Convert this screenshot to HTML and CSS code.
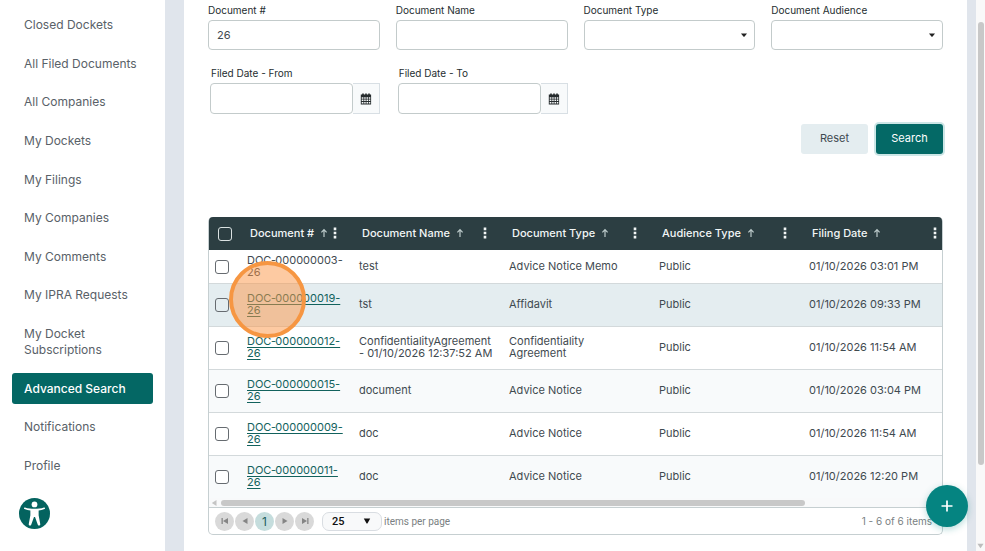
FILE: index.html
```html
<!DOCTYPE html>
<html lang="en">
<head>
<meta charset="utf-8">
<meta name="viewport" content="width=device-width, initial-scale=1">
<title>Advanced Search</title>
<link rel="stylesheet" href="styles.css">
</head>
<body>
<svg class="sprite" aria-hidden="true">
  <symbol id="caret" viewBox="0 0 8 5"><path d="M1 .6h6L4.4 3.8h-.8z" fill="#222"/></symbol>
  <symbol id="sort" viewBox="0 0 8 10"><path d="M4 9V1.8M1.4 4.3 4 1.6l2.6 2.7" fill="none" stroke="#bccaca" stroke-width="1.2"/></symbol>
  <symbol id="kebab" viewBox="0 0 4 12"><path d="M.7.6h2.6v2.6H.7zM.7 4.7h2.6v2.6H.7zM.7 8.8h2.6v2.6H.7z" fill="#f2f6f6"/></symbol>
  <symbol id="calendar" viewBox="0 0 12 12"><path d="M2.2.5h1.6v1h1.4v-1h1.6v1h1.4v-1h1.6v1h1.3v10H.8v-10h1.4z" fill="#252b2d"/><path d="M1.7 4.2h1.7v1.6H1.7zM4.2 4.2h1.5v1.6H4.2zM6.5 4.2H8v1.6H6.5zM8.8 4.2h1.5v1.6H8.8zM1.7 6.6h1.7v1.5H1.7zM4.2 6.6h1.5v1.5H4.2zM6.5 6.6H8v1.5H6.5zM8.8 6.6h1.5v1.5H8.8zM1.7 8.9h1.7v1.6H1.7zM4.2 8.9h1.5v1.6H4.2zM6.5 8.9H8v1.6H6.5zM8.8 8.9h1.5v1.6H8.8z" fill="#f8fafb"/></symbol>
</svg>
<div class="app">
  <aside class="sidebar">
    <nav class="menu">
      <a href="#">Closed Dockets</a>
      <a href="#">All Filed Documents</a>
      <a href="#">All Companies</a>
      <a href="#">My Dockets</a>
      <a href="#">My Filings</a>
      <a href="#">My Companies</a>
      <a href="#">My Comments</a>
      <a href="#">My IPRA Requests</a>
      <a href="#">My Docket Subscriptions</a>
      <a href="#" class="active">Advanced Search</a>
      <a href="#">Notifications</a>
      <a href="#">Profile</a>
    </nav>
    <button class="access" type="button" aria-label="Accessibility options">
      <svg viewBox="0 0 30 30"><circle cx="15" cy="15" r="15" fill="#04635f"/><circle cx="15" cy="6.2" r="2.8" fill="#fff"/><path d="M5.8 9.2c3 1.1 6 1.3 9.2 1.3s6.2-.2 9.2-1.3c1-.3 1.4 1.1.5 1.5-1.8.7-3.9 1.2-5.7 1.5v4.6l1.600 8.500c.2 1.500-1.900 2-2.400.5L15.500 18.500h-1L11.800 25.800c-.5 1.500-2.600 1-2.400-.5l1.600-8.500v-4.600c-1.800-.3-3.900-.8-5.700-1.500-.9-.4-.5-1.800.5-1.500z" fill="#fff"/></svg>
    </button>
  </aside>

  <main class="content">
    <form class="filters">
      <div class="fields">
        <div class="field"><label for="doc-no">Document #</label><input id="doc-no" type="text" value="26"></div>
        <div class="field"><label for="doc-name">Document Name</label><input id="doc-name" type="text"></div>
        <div class="field"><label for="doc-type">Document Type</label>
          <div class="dropdown"><select id="doc-type"><option></option></select><svg><use href="#caret"/></svg></div></div>
        <div class="field"><label for="doc-aud">Document Audience</label>
          <div class="dropdown"><select id="doc-aud"><option></option></select><svg><use href="#caret"/></svg></div></div>
        <div class="field date"><label for="from">Filed Date - From</label>
          <div class="picker"><input id="from" type="text"><button type="button" aria-label="Choose from date"><svg><use href="#calendar"/></svg></button></div></div>
        <div class="field date"><label for="to">Filed Date - To</label>
          <div class="picker"><input id="to" type="text"><button type="button" aria-label="Choose to date"><svg><use href="#calendar"/></svg></button></div></div>
      </div>
      <div class="actions">
        <button type="button" class="btn">Reset</button>
        <button type="button" class="btn primary">Search</button>
      </div>
    </form>

    <section class="grid">
      <table>
        <colgroup><col class="c-check"><col class="c-id"><col class="c-std"><col class="c-std"><col class="c-std"><col></colgroup>
        <thead>
          <tr>
            <th><input type="checkbox" aria-label="Select all"></th>
            <th><div class="head"><span>Document #</span><svg class="sort"><use href="#sort"/></svg><svg class="kebab"><use href="#kebab"/></svg></div></th>
            <th><div class="head"><span>Document Name</span><svg class="sort"><use href="#sort"/></svg><svg class="kebab"><use href="#kebab"/></svg></div></th>
            <th><div class="head"><span>Document Type</span><svg class="sort"><use href="#sort"/></svg><svg class="kebab"><use href="#kebab"/></svg></div></th>
            <th><div class="head"><span>Audience Type</span><svg class="sort"><use href="#sort"/></svg><svg class="kebab"><use href="#kebab"/></svg></div></th>
            <th><div class="head"><span>Filing Date</span><svg class="sort"><use href="#sort"/></svg><svg class="kebab"><use href="#kebab"/></svg></div></th>
          </tr>
        </thead>
        <tbody>
          <tr class="first"><td><input type="checkbox" aria-label="Select row"></td><td>DOC&#8209;000000003-<br>26</td><td>test</td><td>Advice Notice Memo</td><td>Public</td><td>01/10/2026 03:01 PM</td></tr>
          <tr class="hover"><td><input type="checkbox" aria-label="Select row"></td><td class="target"><a href="#">DOC&#8209;000000019-<br>26</a><span class="pointer"></span></td><td>tst</td><td>Affidavit</td><td>Public</td><td>01/10/2026 09:33 PM</td></tr>
          <tr><td><input type="checkbox" aria-label="Select row"></td><td><a href="#">DOC&#8209;000000012-<br>26</a></td><td>ConfidentialityAgreement<br>- 01/10/2026 12:37:52 AM</td><td>Confidentiality<br>Agreement</td><td>Public</td><td>01/10/2026 11:54 AM</td></tr>
          <tr class="alt"><td><input type="checkbox" aria-label="Select row"></td><td><a href="#">DOC&#8209;000000015-<br>26</a></td><td>document</td><td>Advice Notice</td><td>Public</td><td>01/10/2026 03:04 PM</td></tr>
          <tr><td><input type="checkbox" aria-label="Select row"></td><td><a href="#">DOC&#8209;000000009-<br>26</a></td><td>doc</td><td>Advice Notice</td><td>Public</td><td>01/10/2026 11:54 AM</td></tr>
          <tr class="alt"><td><input type="checkbox" aria-label="Select row"></td><td><a href="#">DOC&#8209;000000011-<br>26</a></td><td>doc</td><td>Advice Notice</td><td>Public</td><td>01/10/2026 12:20 PM</td></tr>
        </tbody>
      </table>
      <div class="hscroll"><svg viewBox="0 0 6 8"><path d="M5.5 1v6L.8 4z" fill="#c4c4c4"/></svg><span class="track"><span class="thumb"></span></span></div>
      <div class="pager">
        <button type="button" aria-label="First page"><svg viewBox="0 0 10 10"><path d="M1.5 2h1.300v6H1.500zM8 2v6L3 5z"/></svg></button>
        <button type="button" aria-label="Previous page"><svg viewBox="0 0 10 10"><path d="M7.500 2v6l-5-3z"/></svg></button>
        <button type="button" class="current">1</button>
        <button type="button" aria-label="Next page"><svg viewBox="0 0 10 10"><path d="M2.500 2v6l5-3z"/></svg></button>
        <button type="button" aria-label="Last page"><svg viewBox="0 0 10 10"><path d="M2 2v6l5-3zM7.200 2h1.300v6H7.200z"/></svg></button>
        <div class="dropdown size"><select id="size"><option>25</option></select><svg viewBox="0 0 8 6"><path d="M.8.5h6.400L4.400 5.500h-.8z" fill="#111"/></svg></div>
        <label for="size">items per page</label>
        <span class="count">1 - 6 of 6 items</span>
      </div>
    </section>
  </main>

  <div class="vscroll"><span class="bar"></span><svg viewBox="0 0 8 6"><path d="M.5.5h7L4 5.500z" fill="#bdbdbd"/></svg></div>
</div>
<button class="fab" type="button" aria-label="Add"><svg viewBox="0 0 12 12"><path d="M6 .5v11M.5 6h11" stroke="#fff" stroke-width="1.700"/></svg></button>
</body>
</html>
```
FILE: styles.css
```css
* { box-sizing: border-box; }
body {
  margin: 0;
  font-family: Inter, "Open Sans", sans-serif;
  font-size: 12px;
  color: #3f4a50;
  background: #e0e5ec;
}
button, input, select { font: inherit; color: inherit; margin: 0; }
.sprite { display: none; }

.app {
  display: grid;
  grid-template-columns: 165px 1fr 9px;
  height: 100vh;
  overflow: hidden;
}

/* Sidebar */
.sidebar {
  display: flex;
  flex-direction: column;
  gap: 17px;
  padding: 9px 12px 22px;
  background: #fff;
}
.menu {
  flex: 1;
  display: flex;
  flex-direction: column;
  justify-content: space-between;
}
.menu a {
  padding: 8px 12px 7px;
  line-height: 16px;
  border-radius: 3px;
  color: #596168;
  text-decoration: none;
}
.menu .active { background: #046764; color: #fff; font-weight: 500; }
.access {
  width: 31px;
  height: 31px;
  margin-left: 7px;
  padding: 0;
  border: 0;
  background: none;
}
.access svg { display: block; width: 100%; height: 100%; }

/* Search form */
.content {
  margin: 0 9px 0 19px;
  padding: 0 24px;
  background: #fff;
}
.fields {
  display: grid;
  grid-template-columns: repeat(4, 1fr);
  gap: 13px 16px;
}
.field label {
  display: block;
  font-size: 10px;
  line-height: 20px;
  color: #252d30;
}
.field input, .field select {
  display: block;
  width: 100%;
  height: 30px;
  padding: 0 8px;
  border: 1px solid #c3cbcb;
  border-radius: 4px;
  background: #fff;
  font-size: 11px;
}
.date { padding-left: 2px; }
.date label { padding-left: 1px; }
.picker { display: flex; }
.picker input { flex: 1; min-width: 0; height: 31px; }
.picker button {
  display: grid;
  place-items: center;
  width: 27px;
  padding: 0;
  border: 1px solid #d8dfe4;
  border-left: 0;
  background: #f8fafb;
}
.picker svg { width: 12px; height: 12px; }
.dropdown { display: grid; align-items: center; }
.dropdown select { grid-area: 1 / 1; appearance: none; }
.dropdown svg {
  grid-area: 1 / 1;
  justify-self: end;
  width: 8px;
  height: 5px;
  margin-right: 7px;
  pointer-events: none;
}
.actions {
  display: flex;
  justify-content: flex-end;
  gap: 8px;
  margin: 10px 0 63px;
}
.btn {
  width: 67px;
  height: 30px;
  padding: 0 0 2px;
  border: 0;
  border-radius: 3px;
  background: #e4edf0;
  font-size: 11px;
}
.primary {
  background: #046966;
  color: #fff;
  box-shadow: 0 0 0 2px #cce6e6;
}

/* Results */
.grid {
  border: 1px solid #c6cfd1;
  border-top: 0;
  border-radius: 5px;
}
table {
  width: 100%;
  table-layout: fixed;
  border-collapse: separate;
  border-spacing: 0;
  font-size: 11px;
}
.c-check { width: 30px; }
.c-id { width: 112px; }
.c-std { width: 150px; }
th {
  height: 33px;
  padding: 0 14px 1px 11px;
  background: #2c3e42;
  color: #f2f6f6;
  font-weight: 500;
  text-align: left;
}
th:first-child { padding: 0 0 0 9px; border-top-left-radius: 4px; }
th:last-child { padding-right: 5px; border-top-right-radius: 4px; }
.head { display: flex; align-items: center; }
.sort { width: 8px; height: 10px; margin-left: 6px; }
.kebab { width: 4px; height: 12px; margin-left: auto; }
td {
  height: 43px;
  padding: 0 0 2px 8px;
  border-bottom: 1px solid #d3d9db;
  line-height: 12px;
  white-space: nowrap;
}
td:first-child { padding: 0 0 0 6px; }
.first td { height: 34px; }
.target { position: relative; }
.hover td { background: #e4edf0; }
.alt td { background: #f8fafb; }
tbody tr:last-child td { height: 42px; border-bottom: 0; }
td a { color: #12625d; text-underline-offset: 2px; }
input[type="checkbox"] {
  display: block;
  appearance: none;
  width: 14px;
  height: 14px;
  border: 1px solid #666b70;
  border-radius: 3px;
  background: #fff;
}
th input[type="checkbox"] { border-color: #dbe2e2; background: none; }
.hover input[type="checkbox"] { background: none; }
.pointer {
  position: absolute;
  left: -10px;
  top: -23px;
  z-index: 1;
  width: 77px;
  height: 77px;
  border: 4px solid #f69642;
  border-radius: 50%;
  background: rgba(252, 150, 70, .5);
  pointer-events: none;
}
.hscroll {
  display: flex;
  align-items: center;
  height: 10px;
  padding-left: 2px;
  gap: 4px;
  background: #f8f9fa;
  border-bottom: 1px solid #c6cfd1;
}
.hscroll svg { width: 6px; height: 8px; }
.track { flex: 1; }
.thumb {
  display: block;
  width: 81%;
  height: 6px;
  border-radius: 3px;
  background: #c8c8c8;
}
.pager {
  display: flex;
  align-items: center;
  height: 26px;
  padding: 0 10px 0 6px;
  gap: 1px;
  font-size: 10px;
  color: #7a7f82;
}
.pager button {
  display: grid;
  place-items: center;
  width: 19px;
  height: 19px;
  padding: 0;
  border: 0;
  border-radius: 50%;
  background: #d9d9d9;
}
.pager button svg { width: 10px; height: 10px; fill: #858585; }
.pager .current { background: #c5dddd; color: #20605d; font-size: 12px; }
.size { width: 60px; margin: 0 1px 0 7px; }
.size svg { height: 6px; margin-right: 11px; }
.size select {
  width: 100%;
  height: 19px;
  padding: 0 9px;
  border: 1px solid #d9dde2;
  border-radius: 7px;
  background: #f8f9fa;
  font-family: Roboto, sans-serif;
  font-size: 11px;
  font-weight: 500;
  color: #111;
}
.pager label { font-family: Roboto, sans-serif; }
.count { margin-left: auto; }

/* Window scrollbar */
.vscroll {
  display: flex;
  flex-direction: column;
  align-items: center;
  justify-content: space-between;
  padding: 22px 0 2px;
  background: #f9f9f9;
}
.bar {
  width: 6px;
  height: 84%;
  border-radius: 3px;
  background: #c8c8c8;
}
.vscroll svg { width: 7px; height: 6px; }

.fab {
  position: fixed;
  right: 17px;
  bottom: 24px;
  z-index: 2;
  display: grid;
  place-items: center;
  width: 42px;
  height: 42px;
  padding: 0;
  border: 0;
  border-radius: 50%;
  background: #058481;
  box-shadow: 0 2px 7px rgba(5, 132, 129, .3);
}
.fab svg { width: 12px; height: 12px; }
```
